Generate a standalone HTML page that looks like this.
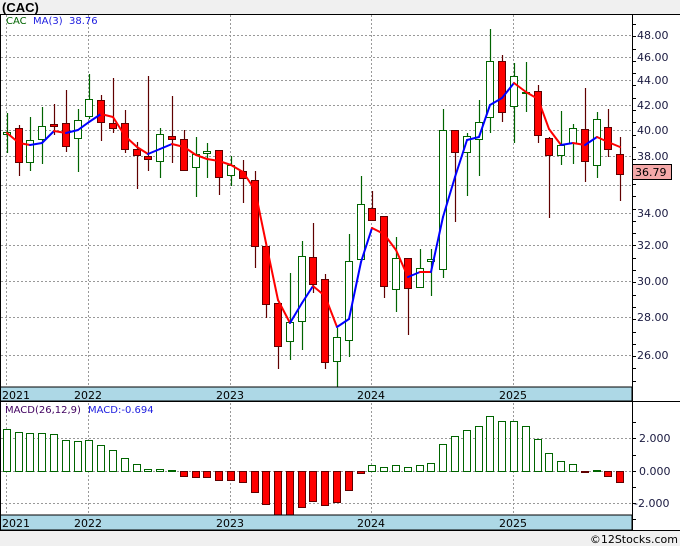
<!DOCTYPE html>
<html><head><meta charset="utf-8"><style>
html,body{margin:0;padding:0;background:#fff;}
svg{display:block;font-family:"DejaVu Sans","Liberation Sans",sans-serif;}
</style></head><body>
<svg id="s" width="680" height="546" viewBox="0 0 680 546" xmlns="http://www.w3.org/2000/svg">
<rect x="0" y="0" width="680" height="546" fill="#f0f0f0"/>
<rect x="0" y="14" width="680" height="516" fill="#fff"/>
<text x="2" y="12" font-size="13" font-weight="bold" fill="#000" font-family="Liberation Sans, sans-serif">(CAC)</text>
<g id="grid" stroke="#999" stroke-width="1" stroke-dasharray="2,2" fill="none"></g>
<g id="cand"></g>
<g id="ma" fill="none" stroke-width="2"></g>
<g id="macd"></g>
<rect x="0" y="387" width="632" height="14" fill="#add8e6" stroke="#000" stroke-width="1"/>
<rect x="0" y="515" width="632" height="15" fill="#add8e6" stroke="#000" stroke-width="1"/>
<g font-size="11" fill="#000">
<text x="2" y="399">2021</text><text x="88" y="399" text-anchor="middle">2022</text><text x="230" y="399" text-anchor="middle">2023</text><text x="371" y="399" text-anchor="middle">2024</text><text x="513" y="399" text-anchor="middle">2025</text>
<text x="2" y="527">2021</text><text x="88" y="527" text-anchor="middle">2022</text><text x="230" y="527" text-anchor="middle">2023</text><text x="371" y="527" text-anchor="middle">2024</text><text x="513" y="527" text-anchor="middle">2025</text>
</g>
<line x1="0.5" y1="14" x2="0.5" y2="530" stroke="#000"/>
<line x1="632.5" y1="14" x2="632.5" y2="530" stroke="#000"/>
<line x1="0" y1="14.5" x2="680" y2="14.5" stroke="#000"/>
<line x1="0" y1="530.5" x2="680" y2="530.5" stroke="#000"/>
<line x1="0" y1="401.5" x2="680" y2="401.5" stroke="#000"/>
<g id="ticks" stroke="#000"></g>
<g font-size="11" fill="#1a1a40">
<text x="637" y="39">48.00</text><text x="637" y="61">46.00</text><text x="637" y="84">44.00</text><text x="637" y="109">42.00</text><text x="637" y="134">40.00</text><text x="637" y="160">38.00</text><text x="637" y="217">34.00</text><text x="637" y="249">32.00</text><text x="637" y="285">30.00</text><text x="637" y="321">28.00</text><text x="637" y="359">26.00</text>
<text x="639" y="442">2.000</text><text x="639" y="475">0.000</text><text x="634" y="507">-2.000</text>
</g>
<rect x="632.5" y="164.5" width="39" height="15" fill="#f4a8a8" stroke="#000"/>
<text x="635" y="176" font-size="11" fill="#000">36.79</text>
<g font-size="10">
<text x="6" y="24" fill="#006400">CAC</text><text x="33" y="24" fill="#2020e0">MA(3)</text><text x="69" y="24" fill="#2020e0">38.76</text>
<text x="5" y="413" fill="#400060">MACD(26,12,9)</text><text x="88" y="413" fill="#2020e0">MACD:-0.694</text>
</g>
<text x="678" y="543" font-size="11" fill="#000" text-anchor="end">©12Stocks.com</text>
</svg>
<script>
var NS="http://www.w3.org/2000/svg";
function el(p,t,a){var e=document.createElementNS(NS,t);for(var k in a)e.setAttribute(k,a[k]);document.getElementById(p).appendChild(e);return e;}
[6,88,230,371,513].forEach(function(x){el('grid','line',{x1:x+.5,y1:15,x2:x+.5,y2:530});});
[35,57,80,105,130,156,185,213,245,281,317,355,438,471,503].forEach(function(y){el('grid','line',{x1:1,y1:y+.5,x2:632,y2:y+.5});});
for(var y=24;y<387;y+=12.3){el('ticks','line',{x1:632,y1:Math.round(y)+.5,x2:636,y2:Math.round(y)+.5});}
[422,438,455,471,487,503,519].forEach(function(y){el('ticks','line',{x1:632,y1:y+.5,x2:636,y2:y+.5});});
var C=[[7,132,134,113,153,1],[19,128,162,125,176,0],[30,140,162,117,171,1],[42,126,139,107,164,1],[54,124,126,104,135,0],[66,123,146,90,152,0],[78,120,138,109,172,1],[89,99,116,74,119,1],[101,100,122,95,141,0],[113,123,128,78,133,0],[125,123,149,110,153,0],[137,149,155,142,189,0],[148,156,159,76,171,0],[160,134,161,128,178,1],[172,136,139,96,163,0],[184,139,170,130,171,0],[196,154,167,137,197,1],[207,151,153,143,178,1],[219,150,177,150,195,0],[231,165,175,156,186,1],[243,171,178,160,203,0],[255,180,246,171,268,0],[266,246,304,246,318,0],[278,303,346,303,369,0],[290,322,341,273,360,1],[302,256,321,241,350,1],[313,257,284,223,293,0],[325,279,362,274,369,0],[337,337,361,328,388,1],[349,261,340,234,357,1],[361,204,259,176,259,1],[372,208,220,191,220,0],[384,216,286,216,298,0],[396,258,289,237,312,1],[408,258,288,258,335,0],[420,268,287,249,287,1],[431,259,261,249,296,1],[443,130,269,109,278,1],[455,130,152,130,222,0],[467,136,152,133,196,1],[479,122,139,100,176,1],[490,61,117,29,133,1],[502,61,112,55,122,0],[514,76,106,63,143,1],[526,92,93,62,112,1],[538,91,135,85,143,0],[549,138,155,137,218,0],[561,145,155,111,165,1],[573,128,143,124,164,1],[585,129,161,88,182,0],[597,119,165,112,178,1],[608,127,149,109,157,0],[620,154,174,137,201,0]];
C.forEach(function(c){var g=c[5],col=g?'#006400':'#600000';
el('cand','line',{x1:c[0]+.5,y1:c[3],x2:c[0]+.5,y2:c[4],stroke:col,'stroke-width':1.2});
el('cand','rect',{x:c[0]-3.5,y:c[1]+.5,width:7,height:Math.max(1,c[2]-c[1]),fill:g?'#fff':'#ff0000',stroke:col,'stroke-width':1});});
var M=[[7,133],[19,143],[30,145],[42,143],[54,131],[66,133],[78,130],[89,122],[101,114],[113,117],[125,136],[137,147],[148,154],[160,149],[172,144],[184,147],[196,155],[207,159],[219,161],[231,165],[243,172],[255,190],[266,243],[278,300],[290,323],[302,303],[313,286],[325,296],[337,327],[349,319],[361,262],[372,228],[384,234],[396,250],[408,277],[420,272],[431,272],[443,217],[455,177],[467,140],[479,137],[490,105],[502,98],[514,83],[526,92],[538,99],[549,129],[561,145],[573,143],[585,145],[597,137],[608,142],[620,147]];
for(var i=1;i<M.length;i++){var up=M[i][1]<M[i-1][1];el('ma','line',{x1:M[i-1][0],y1:M[i-1][1],x2:M[i][0],y2:M[i][1],stroke:up?'#0000ff':'#ff0000','stroke-linecap':'round'});}
var B=[429,432,433,433,434,440,441,440,445,450,458,464,469,469,470,476,477,477,480,480,482,492,504,515,515,507,501,505,502,490,473,465,467,465,467,465,463,444,436,430,426,416,421,421,426,439,453,461,464,472,470,476,482];
B.forEach(function(v,i){var x=C[i][0];var z=471;
if(v<z){el('macd','rect',{x:x-3.5,y:v+.5,width:7,height:z-v,fill:'#fff',stroke:'#006400'});}
else{el('macd','rect',{x:x-3.5,y:z+.5,width:7,height:Math.max(1,v-z),fill:'#ff0000',stroke:'#600000'});}});
</script>
</body></html>
